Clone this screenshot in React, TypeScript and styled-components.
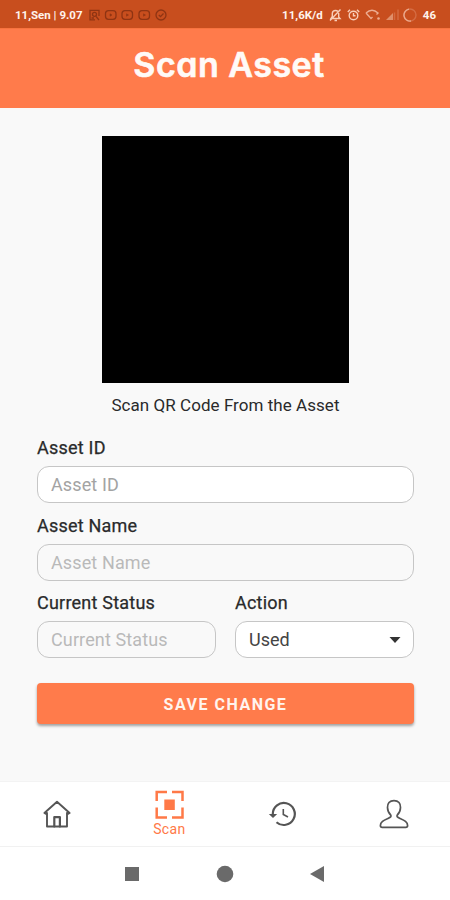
import React from 'react';
import styled, { createGlobalStyle } from 'styled-components';

const Global = createGlobalStyle`
  * { box-sizing: border-box; }
  body { margin: 0; background: #f9f9f9; }
`;

const Screen = styled.div`
  width: 450px;
  height: 900px;
  display: flex;
  flex-direction: column;
  background: #f9f9f9;
  font-family: Roboto, sans-serif;
  color: #292a2b;
  overflow: hidden;
`;

const StatusBar = styled.div`
  height: 28px;
  flex: none;
  padding: 1px 14px 0 15px;
  display: flex;
  align-items: center;
  justify-content: space-between;
  background: #c84e1e;
  color: #fff3ec;
`;

const StatusGroup = styled.div`
  display: flex;
  align-items: center;
`;

const StatusText = styled.span<{ $gap?: number }>`
  margin-left: ${(p) => p.$gap ?? 0}px;
  font-size: 11.5px;
  line-height: 14px;
  font-weight: 700;
  white-space: nowrap;
`;

const StatusIcons = styled.svg<{ $gap: number }>`
  display: block;
  margin-left: ${(p) => p.$gap}px;
`;

const Header = styled.header`
  height: 80px;
  flex: none;
  display: flex;
  justify-content: center;
  padding: 15px 0 0 8px;
  background: #ff7b4b;
  border-top: 1px solid #f8733f;
`;

const Title = styled.h1`
  margin: 0;
  font: 600 34px/42px Inter, sans-serif;
  font-feature-settings: 'cv11';
  letter-spacing: 0.5px;
  -webkit-text-stroke: 0.6px currentColor;
  color: #fffaf7;
  white-space: nowrap;
`;

const Content = styled.main`
  flex: 1;
  display: flex;
  flex-direction: column;
  padding: 28px 36px 0 37px;
`;

const Camera = styled.div`
  width: 247px;
  height: 247px;
  margin-left: 65px;
  flex: none;
  background: #000;
`;

const Caption = styled.p`
  margin: 12px 0 0;
  text-align: center;
  font-size: 17px;
  line-height: 20px;
  letter-spacing: 0.05px;
`;

const Form = styled.form`
  display: flex;
  flex-direction: column;
  gap: 11.5px;
  margin-top: 22px;
`;

const Columns = styled.div`
  display: grid;
  grid-template-columns: 179px 179px;
  justify-content: space-between;
`;

const Field = styled.label`
  display: flex;
  flex-direction: column;
  gap: 7px;
`;

const FieldLabel = styled.span`
  font-size: 18px;
  line-height: 22px;
  font-weight: 400;
  letter-spacing: 0.22px;
  -webkit-text-stroke: 0.25px currentColor;
`;

const Input = styled.input<{ $muted?: boolean }>`
  width: 100%;
  height: 37px;
  padding: 0 13px;
  border: 1.3px solid #c6c6c6;
  border-radius: 12px;
  background: ${(p) => (p.$muted ? '#f9f9f9' : '#fff')};
  font: 400 18px/22px Roboto, sans-serif;
  letter-spacing: 0.12px;
  outline: none;
  &::placeholder {
    color: ${(p) => (p.$muted ? '#b9b9b9' : '#a3a3a3')};
    opacity: 1;
  }
`;

const Select = styled.div`
  height: 37px;
  display: flex;
  align-items: center;
  justify-content: space-between;
  padding: 0 12px 0 13px;
  border: 1.3px solid #c6c6c6;
  border-radius: 12px;
  background: #fff;
  font-size: 18px;
  color: #444;
`;

const SaveButton = styled.button`
  height: 41px;
  margin-top: 13.5px;
  padding: 2px 0 0;
  border: 0;
  border-radius: 4px;
  background: #ff7b4b;
  color: #fff4ee;
  font: 700 16px/20px Roboto, sans-serif;
  letter-spacing: 1.5px;
  box-shadow: 0 2px 3px rgba(0, 0, 0, 0.36);
`;

const TabBar = styled.nav`
  height: 66px;
  flex: none;
  display: grid;
  grid-template-columns: repeat(4, 1fr);
  padding-left: 1px;
  background: #fff;
  border-top: 1px solid #f3f3f3;
  border-bottom: 1px solid #f1f1f1;
`;

const Tab = styled.a<{ $active?: boolean }>`
  display: flex;
  flex-direction: column;
  align-items: center;
  justify-content: ${(p) => (p.$active ? 'flex-start' : 'center')};
  padding-top: ${(p) => (p.$active ? 8 : 0)}px;
  color: ${(p) => (p.$active ? '#ff7947' : '#555')};
`;

const TabLabel = styled.span`
  margin-top: 2px;
  font-size: 14px;
  line-height: 17px;
  letter-spacing: 0.35px;
`;

const SystemBar = styled.div`
  height: 53px;
  flex: none;
  display: flex;
  align-items: center;
  justify-content: center;
  gap: 76px;
  background: #fff;
`;

const App: React.FC = () => (
  <>
    <Global />
    <Screen>
      <StatusBar>
        <StatusGroup>
          <StatusText>11,Sen | 9.07</StatusText>
          <StatusIcons $gap={5} width="80" height="14" viewBox="0 0 80 14" fill="none" stroke="#8f3413" strokeWidth="1.3">
            <path d="M11 8V2.300H2V11.800H7" />
            <circle cx="6.500" cy="6.300" r="2" />
            <path d="M8 8.300L11 12M3.500 10H6" />
            <rect x="17.500" y="2.700" width="10.500" height="8.600" rx="3" />
            <rect x="34" y="2.700" width="10.500" height="8.600" rx="3" />
            <rect x="51" y="2.700" width="10.500" height="8.600" rx="3" />
            <path d="M22 5.800V8.200L24 7ZM38.500 5.800V8.200L40.500 7ZM55.500 5.800V8.200L57.500 7Z" fill="#8f3413" strokeWidth=".5" />
            <circle cx="73" cy="7" r="5" />
            <path d="M70.800 7L72.500 8.600L75.500 5.500" />
          </StatusIcons>
        </StatusGroup>
        <StatusGroup>
          <StatusText>11,6K/d</StatusText>
          <StatusIcons $gap={5} width="92" height="14" viewBox="0 0 92 14" fill="none" stroke="#f8cdb9" strokeWidth="1.4">
            <path d="M3 10.500H12L10.700 9V5.500Q10.400 2.500 7.500 2.500Q4.500 2.500 4.300 5.500V8.500ZM6.500 12.500H9M2 12.500L12.500 1.500" />
            <circle cx="25.500" cy="7.500" r="4.300" />
            <path d="M25.500 5V7.700H27.500M19.800 4L22 1.800M31.200 4L29 1.800" />
            <path d="M38 5Q44-.5 50 5L48.500 6.500M38 5L43 10.500L44.500 9" stroke="#edad92" />
            <circle cx="50.500" cy="10.500" r="1.300" fill="#edad92" stroke="none" />
            <path d="M58 12L65 5V12Z" fill="#df8f6b" stroke="none" />
            <path d="M66.500 4.500V12M70 1.500V12" stroke="#d36a40" strokeWidth="1.500" />
            <circle cx="82" cy="7" r="6" stroke="#d46c43" />
            <path d="M83 13A6 6 0 0 1 81 1.100" stroke="#eba98d" />
          </StatusIcons>
          <StatusText $gap={3}>46</StatusText>
        </StatusGroup>
      </StatusBar>

      <Header>
        <Title>Scan Asset</Title>
      </Header>

      <Content>
        <Camera />
        <Caption>Scan QR Code From the Asset</Caption>
        <Form>
          <Field>
            <FieldLabel>Asset ID</FieldLabel>
            <Input placeholder="Asset ID" />
          </Field>
          <Field>
            <FieldLabel>Asset Name</FieldLabel>
            <Input placeholder="Asset Name" $muted readOnly />
          </Field>
          <Columns>
            <Field>
              <FieldLabel>Current Status</FieldLabel>
              <Input placeholder="Current Status" $muted readOnly />
            </Field>
            <Field as="div">
              <FieldLabel>Action</FieldLabel>
              <Select>
                Used
                <svg width="12" height="6" viewBox="0 0 12 6">
                  <path d="M.5 0H11.500L6 6Z" fill="#333" />
                </svg>
              </Select>
            </Field>
          </Columns>
          <SaveButton type="button">SAVE CHANGE</SaveButton>
        </Form>
      </Content>

      <TabBar>
        <Tab>
          <svg width="28" height="28" viewBox="0 0 28 28" fill="none" stroke="currentColor" strokeWidth="1.900" strokeLinejoin="round" strokeLinecap="round">
            <path d="M1.400 13L14 1.800L26.600 13L25 13.800L24 12.900V26.500H4V12.900L3 13.800Z" />
            <path d="M11.300 26.500V17.200H16.900V26.500" strokeWidth="2.200" />
          </svg>
        </Tab>
        <Tab $active>
          <svg width="29" height="29" viewBox="0 0 29 29" fill="none" stroke="currentColor" strokeWidth="2.500">
            <path d="M1.700 11V1.900H12M17 1.900H27.500V11M27.500 17.500V27.400H17M12 27.400H1.700V17.500" />
            <rect x="9.300" y="9.500" width="10.500" height="10.500" fill="currentColor" stroke="none" />
          </svg>
          <TabLabel>Scan</TabLabel>
        </Tab>
        <Tab>
          <svg width="28" height="28" viewBox="0 0 28 28" fill="none" stroke="currentColor" strokeWidth="2.200">
            <path d="M4.800 14A11 11 0 1 1 8.500 22.200" />
            <path d="M.8 14H9.200L5 18Z" fill="currentColor" stroke="none" />
            <path d="M15.300 9V14.500L20 17" strokeWidth="1.600" />
          </svg>
        </Tab>
        <Tab>
          <svg width="30" height="30" viewBox="0 0 30 30" fill="none" stroke="currentColor" strokeWidth="1.700" strokeLinejoin="round">
            <path d="M15 1.600C10.500 1.600 8.300 4.500 8.500 8.500C8.600 12.200 10 14.500 11.700 16C12.700 17.500 11.500 18.300 9 19.500C4.500 21.500 1.500 22.800 1.400 26.500Q1.400 28.400 3.200 28.400H26.800Q28.600 28.400 28.600 26.500C28.500 22.800 25.500 21.500 21 19.500C18.500 18.300 17.300 17.500 18.300 16C20 14.500 21.400 12.200 21.500 8.500C21.700 4.500 19.500 1.600 15 1.600Z" />
          </svg>
        </Tab>
      </TabBar>

      <SystemBar>
        <svg width="16" height="16" viewBox="0 0 16 16" fill="#6a6a6a">
          <rect x="1" y="1" width="14" height="14" />
        </svg>
        <svg width="18" height="18" viewBox="0 0 18 18" fill="#6a6a6a">
          <circle cx="9" cy="9" r="8.300" />
        </svg>
        <svg width="16" height="18" viewBox="0 0 16 18" fill="#6a6a6a">
          <path d="M0 9L14 1V17Z" />
        </svg>
      </SystemBar>
    </Screen>
  </>
);

export default App;
